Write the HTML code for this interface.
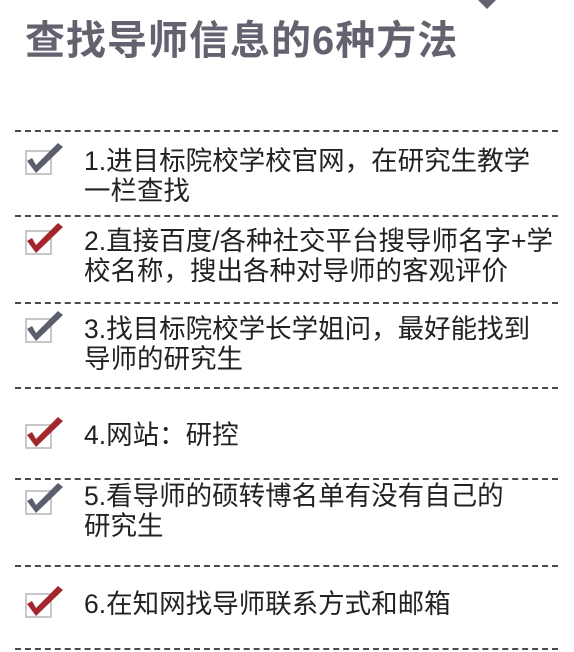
<!DOCTYPE html>
<html><head><meta charset="utf-8"><style>
body{margin:0;width:574px;height:652px;background:#fff;overflow:hidden;position:relative;font-family:"Liberation Sans","Noto Sans CJK SC",sans-serif}
.t{position:absolute;left:25px;top:8px;font-size:40px;font-weight:bold;color:#62636f;letter-spacing:1px;white-space:nowrap}
.d{position:absolute;left:15px;width:543px;height:0;border-top:2px dashed #4a4a4a}
.x{position:absolute;left:84px;font-size:26.5px;color:#222;line-height:30px;white-space:nowrap}
svg.c{position:absolute;left:24px;width:42px;height:36px}
</style></head><body>
<svg style="position:absolute;left:478px;top:0" width="20" height="10"><polygon points="0,0 18,0 9,9" fill="#62636f"/></svg>
<div class="t">查找导师信息的6种方法</div>
<div class="d" style="top:130px"></div>
<div class="d" style="top:215px"></div>
<div class="d" style="top:302px"></div>
<div class="d" style="top:387px"></div>
<div class="d" style="top:478px"></div>
<div class="d" style="top:565px"></div>
<div class="d" style="top:648px"></div>

<svg class="c" style="top:140px" viewBox="0 0 42 36"><rect x="2" y="11" width="25" height="23" fill="none" stroke="#b5b5b5" stroke-width="1.5"/><polygon points="3,21 8,18 12,25 34,3 39,7 12,33" fill="#5b5e6c"/></svg>
<div class="x" style="top:146px">1.进目标院校学校官网，在研究生教学<br>一栏查找</div>

<svg class="c" style="top:220px" viewBox="0 0 42 36"><rect x="2" y="11" width="25" height="23" fill="none" stroke="#b5b5b5" stroke-width="1.5"/><polygon points="3,21 8,18 12,25 34,3 39,7 12,33" fill="#a3262f"/></svg>
<div class="x" style="top:226px">2.直接百度/各种社交平台搜导师名字+学<br>校名称，搜出各种对导师的客观评价</div>

<svg class="c" style="top:308px" viewBox="0 0 42 36"><rect x="2" y="11" width="25" height="23" fill="none" stroke="#b5b5b5" stroke-width="1.5"/><polygon points="3,21 8,18 12,25 34,3 39,7 12,33" fill="#5b5e6c"/></svg>
<div class="x" style="top:314px">3.找目标院校学长学姐问，最好能找到<br>导师的研究生</div>

<svg class="c" style="top:414px" viewBox="0 0 42 36"><rect x="2" y="11" width="25" height="23" fill="none" stroke="#b5b5b5" stroke-width="1.5"/><polygon points="3,21 8,18 12,25 34,3 39,7 12,33" fill="#a3262f"/></svg>
<div class="x" style="top:420px">4.网站：研控</div>

<svg class="c" style="top:480px" viewBox="0 0 42 36"><rect x="2" y="11" width="25" height="23" fill="none" stroke="#b5b5b5" stroke-width="1.5"/><polygon points="3,21 8,18 12,25 34,3 39,7 12,33" fill="#5b5e6c"/></svg>
<div class="x" style="top:481px">5.看导师的硕转博名单有没有自己的<br>研究生</div>

<svg class="c" style="top:583px" viewBox="0 0 42 36"><rect x="2" y="11" width="25" height="23" fill="none" stroke="#b5b5b5" stroke-width="1.5"/><polygon points="3,21 8,18 12,25 34,3 39,7 12,33" fill="#a3262f"/></svg>
<div class="x" style="top:589px">6.在知网找导师联系方式和邮箱</div>
</body></html>
